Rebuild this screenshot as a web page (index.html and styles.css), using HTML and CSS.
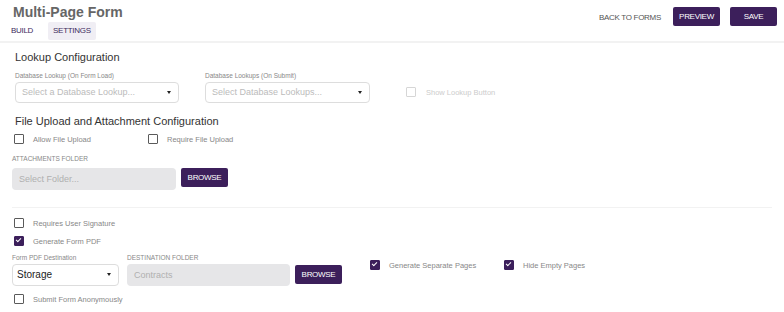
FILE: index.html
```html
<!DOCTYPE html>
<html lang="en">

<head>
    <meta charset="UTF-8">
    <meta name="viewport" content="width=device-width, initial-scale=1.0">
    <title>Multi-Page Form</title>
    <link rel="stylesheet" href="styles.css">
</head>

<body>
    <header class="topbar">
        <div class="brand">
            <h1 class="title">Multi-Page Form</h1>
            <nav class="tabs">
                <a class="tab">BUILD</a>
                <a class="tab active">SETTINGS</a>
            </nav>
        </div>
        <div class="actions">
            <a class="link-btn">BACK TO FORMS</a>
            <button class="btn">PREVIEW</button>
            <button class="btn">SAVE</button>
        </div>
    </header>

    <main class="content">
        <section class="group lookup">
            <h2>Lookup Configuration</h2>
            <div class="row">
                <div class="field f-lookup">
                    <label>Database Lookup (On Form Load)</label>
                    <div class="select placeholder">Select a Database Lookup...<span class="caret"></span></div>
                </div>
                <div class="field f-lookups">
                    <label>Database Lookups (On Submit)</label>
                    <div class="select placeholder">Select Database Lookups...<span class="caret"></span></div>
                </div>
                <div class="check disabled show-lookup"><span class="box"></span>Show Lookup Button</div>
            </div>
        </section>

        <section class="group upload">
            <h2>File Upload and Attachment Configuration</h2>
            <div class="row checks">
                <div class="check c-allow"><span class="box"></span>Allow File Upload</div>
                <div class="check"><span class="box"></span>Require File Upload</div>
            </div>
            <label class="caps attach-label">ATTACHMENTS FOLDER</label>
            <div class="row">
                <div class="input w-folder">Select Folder...</div>
                <button class="btn browse">BROWSE</button>
            </div>
        </section>

        <hr class="divider">

        <section class="group pdf">
            <div class="check"><span class="box"></span>Requires User Signature</div>
            <div class="check gap-top"><span class="box checked"></span>Generate Form PDF</div>
            <div class="row dest-row">
                <div class="field f-storage">
                    <label>Form PDF Destination</label>
                    <div class="select value">Storage<span class="caret"></span></div>
                </div>
                <div class="field f-dest">
                    <label class="caps">DESTINATION FOLDER</label>
                    <div class="input">Contracts</div>
                </div>
                <button class="btn browse dest-browse">BROWSE</button>
                <div class="check c-separate"><span class="box checked"></span>Generate Separate Pages</div>
                <div class="check c-hide"><span class="box checked"></span>Hide Empty Pages</div>
            </div>
            <div class="check anon"><span class="box"></span>Submit Form Anonymously</div>
        </section>
    </main>
</body>

</html>
```

FILE: styles.css
```css
body {
    margin: 0;
    background-color: #FFFFFF;
    font-family: "Liberation Sans", Arial, sans-serif;
    color: #333333;
}

.topbar {
    display: flex;
    justify-content: space-between;
    height: 41px;
    border-bottom: 2px solid #F2F2F2;
}

.brand {
    padding-left: 11px;
}

.title {
    margin: 4px 0 0 2px;
    font-family: "Liberation Sans", Arial, sans-serif;
    font-size: 14px;
    font-weight: 800;
    line-height: 17px;
    color: #666666;
}

.tabs {
    display: flex;
    margin-top: 1px;
}

.tab {
    display: block;
    height: 18px;
    line-height: 18px;
    font-size: 8px;
    color: #3D2B5C;
    letter-spacing: -0.3px;
}

.tab.active {
    margin-left: 15px;
    padding: 0 5px;
    background-color: #F0EEF4;
    border-radius: 2px;
}

.actions {
    display: flex;
    align-items: flex-start;
    padding-top: 7px;
    padding-right: 7px;
}

.link-btn {
    margin: 6px 12px 0 0;
    font-size: 8px;
    color: #555555;
    letter-spacing: -0.3px;
}

.btn {
    height: 19px;
    width: 47px;
    padding: 0;
    border: none;
    border-radius: 2px;
    background-color: #3C1F5B;
    color: #FFFFFF;
    font-family: "Liberation Sans", Arial, sans-serif;
    font-size: 8px;
    letter-spacing: -0.3px;
    cursor: pointer;
}

.actions .btn + .btn {
    margin-left: 10px;
}

.content {
    padding: 0 12px;
}

.group h2 {
    margin: 0;
    font-size: 11px;
    font-weight: normal;
    line-height: 14px;
    color: #333333;
}

.lookup {
    padding-left: 3px;
    padding-top: 7px;
}

.row {
    display: flex;
    align-items: flex-start;
}

.field label,
.attach-label {
    display: block;
    font-size: 6.5px;
    line-height: 9px;
    color: #888888;
}

.lookup .row {
    margin-top: 7px;
}

.field label {
    margin-bottom: 2px;
}

.f-lookup,
.f-lookups {
    width: 164px;
}

.f-lookups {
    margin-left: 26px;
}

.f-lookups .select {
    width: 165px;
}

.select {
    position: relative;
    box-sizing: border-box;
    height: 21px;
    line-height: 19px;
    padding-left: 6px;
    border: 1px solid #DDDDDD;
    border-radius: 4px;
    font-size: 9px;
}

.select.placeholder {
    color: #BBBBBB;
}

.select.value {
    height: 22px;
    line-height: 20px;
    padding-left: 4px;
    font-size: 10px;
    color: #222222;
}

.caret {
    position: absolute;
    right: 7px;
    top: 8px;
    width: 0;
    height: 0;
    border-left: 2.5px solid transparent;
    border-right: 2.5px solid transparent;
    border-top: 3px solid #222222;
}

.check {
    display: flex;
    align-items: center;
    height: 12px;
    padding-left: 2px;
    font-size: 7.5px;
    color: #888888;
}

.box {
    position: relative;
    box-sizing: border-box;
    width: 10px;
    height: 10px;
    margin-right: 9px;
    border: 1.5px solid #5A5A5A;
    border-radius: 1px;
    flex-shrink: 0;
}

.box.checked {
    background-color: #3C1F5B;
    border-color: #3C1F5B;
}

.box.checked::after {
    content: "";
    position: absolute;
    left: 2px;
    top: 0px;
    width: 2px;
    height: 4px;
    border-right: 1.2px solid #FFFFFF;
    border-bottom: 1.2px solid #FFFFFF;
    transform: rotate(45deg);
}

.check.disabled {
    color: #CCCCCC;
}

.check.disabled .box {
    border-color: #D6D6D6;
}

.show-lookup {
    margin-left: 35px;
    margin-top: 15px;
}

.show-lookup .box {
    margin-right: 10px;
}

.upload {
    padding-top: 11px;
}

.upload h2 {
    padding-left: 3px;
}

.checks {
    margin-top: 5px;
}

.c-allow {
    width: 132px;
}

.caps {
    text-transform: uppercase;
}

.attach-label {
    margin-top: 9px;
    margin-bottom: 5px;
}

.input {
    box-sizing: border-box;
    height: 22px;
    line-height: 22px;
    padding-left: 7px;
    border-radius: 4px;
    background-color: #E6E6E8;
    font-size: 9px;
    color: #B0B0B0;
}

.w-folder {
    width: 164px;
}

.browse {
    margin-left: 5px;
    margin-top: 0px;
}

.divider {
    margin: 17px 0 0;
    border: none;
    border-top: 1.5px solid #F2F2F2;
}

.pdf {
    padding-top: 9px;
}

.gap-top {
    margin-top: 6px;
}

.dest-row {
    margin-top: 6px;
}

.f-storage {
    width: 107px;
}

.f-dest {
    width: 163px;
    margin-left: 8px;
}

.dest-browse {
    margin-top: 12px;
}

.c-separate {
    margin-left: 26px;
    margin-top: 6px;
    width: 132px;
}

.c-hide {
    margin-top: 6px;
}

.anon {
    margin-top: 7px;
}
```
